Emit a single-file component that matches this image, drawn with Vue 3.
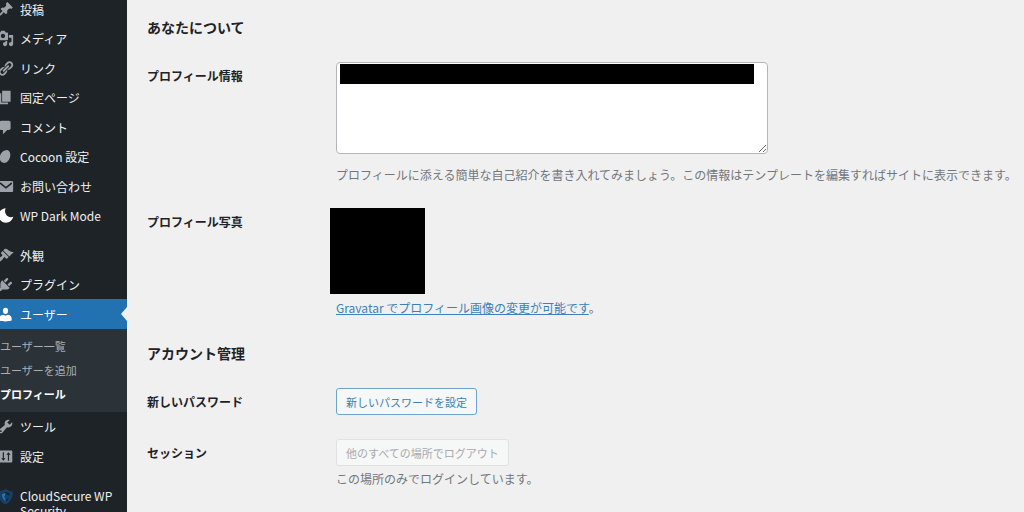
<script setup>
const groups = [
  [
    { label: '投稿', icon: 'post' },
    { label: 'メディア', icon: 'media' },
    { label: 'リンク', icon: 'link' },
    { label: '固定ページ', icon: 'page' },
    { label: 'コメント', icon: 'comment' },
    { label: 'Cocoon 設定', icon: 'cocoon' },
    { label: 'お問い合わせ', icon: 'mail' },
    { label: 'WP Dark Mode', icon: 'moon' },
  ],
  [
    { label: '外観', icon: 'appearance' },
    { label: 'プラグイン', icon: 'plugin' },
    {
      label: 'ユーザー',
      icon: 'user',
      current: true,
      children: [
        { label: 'ユーザー一覧' },
        { label: 'ユーザーを追加' },
        { label: 'プロフィール', current: true },
      ],
    },
    { label: 'ツール', icon: 'tool' },
    { label: '設定', icon: 'settings' },
  ],
  [{ label: 'CloudSecure WP Security', icon: 'shield' }],
]

const icons = {
  post: 'M10.44 3.02l1.82-1.82 6.36 6.35-1.83 1.82c-1.05-.68-2.48-.57-3.41.36l-.75.75c-.92.93-1.04 2.35-.35 3.41l-1.83 1.82-2.41-2.41-2.8 2.79c-.42.42-3.38 2.71-3.8 2.29s1.86-3.39 2.28-3.81l2.79-2.79L4.1 9.36l1.83-1.82c1.05.69 2.48.57 3.4-.36l.75-.75c.93-.92 1.05-2.35.36-3.41z',
  media: 'M13 11V4c0-.55-.45-1-1-1h-1.67L9 1H5L3.67 3H2c-.55 0-1 .45-1 1v7c0 .55.45 1 1 1h10c.55 0 1-.45 1-1zM7 4.5c1.38 0 2.5 1.12 2.5 2.5S8.38 9.5 7 9.5 4.5 8.38 4.5 7 5.62 4.5 7 4.5zM14 6h5v10.5c0 1.38-1.12 2.5-2.5 2.5S14 17.88 14 16.5s1.12-2.5 2.5-2.5c.17 0 .34.02.5.05V9h-3V6zm-4 8.05V13h2v3.5c0 1.38-1.12 2.5-2.5 2.5S7 17.88 7 16.5 8.12 14 9.5 14c.17 0 .34.02.5.05z',
  link: 'M17.74 2.76c1.68 1.69 1.68 4.41 0 6.1l-1.53 1.52c-1.12 1.12-2.7 1.47-4.14 1.09l2.62-2.61.76-.77.76-.76c.84-.84.84-2.2 0-3.04-.84-.85-2.2-.85-3.04 0l-.77.76-3.38 3.38c-.37-1.44-.02-3.02 1.1-4.14l1.52-1.53c1.69-1.68 4.42-1.68 6.1 0zM8.59 13.43l5.34-5.34c.42-.42.42-1.1 0-1.52-.44-.43-1.13-.39-1.53 0l-5.33 5.34c-.42.42-.42 1.1 0 1.52.44.43 1.13.39 1.52 0zm-.76 2.29l4.14-4.15c.38 1.44.03 3.02-1.09 4.14l-1.52 1.53c-1.69 1.68-4.41 1.68-6.1 0-1.68-1.68-1.68-4.42 0-6.1l1.53-1.52c1.12-1.12 2.7-1.47 4.14-1.1l-4.14 4.15c-.85.84-.85 2.2 0 3.05.84.84 2.2.84 3.04 0z',
  page: 'M6 15V2h10v13H6zm-1 1h8v2H3V5h2v11z',
  comment: 'M5 2h9c1.1 0 2 .9 2 2v7c0 1.1-.9 2-2 2h-2l-5 5v-5H5c-1.1 0-2-.9-2-2V4c0-1.1.9-2 2-2z',
  cocoon: 'M10.500 2.500c3.600-.2 5.500 2.600 5.100 6.500-.5 4.600-3.500 8.500-7.300 8.500-3.600 0-5.500-3.100-5-7.100.6-4.500 3.500-7.700 7.200-7.900z',
  mail: 'M3.500 3.500h14c.8 0 1.500.7 1.500 1.500v10c0 .8-.7 1.500-1.500 1.500h-14c-.8 0-1.500-.7-1.500-1.500V5c0-.8.7-1.500 1.500-1.500zM3.400 5.500v1.600l7.100 5.400 7.100-5.400V5.500l-1-.1-6.100 4.800-6.100-4.800z',
  moon: 'M10.200 1.500c-2.200 4.800.9 10.300 5.800 10.600 1.100.1 2.100-.1 3.100-.5-.9 3.900-4.300 6.900-8.500 6.900-4.800 0-8.700-3.900-8.700-8.600 0-4.300 3.600-8.200 8.300-8.400z',
  appearance: 'M14.48 11.06L7.41 3.99l1.5-1.5c.5-.56 2.3-.47 3.51.32 1.21.8 1.43 1.28 2.91 2.1 1.18.64 2.45 1.26 4.45.85zm-.71.71L6.7 4.7 4.93 6.47c-.39.39-.39 1.02 0 1.41l1.06 1.06c.39.39.39 1.03 0 1.42-.6.6-1.43 1.11-2.21 1.69-.35.26-.7.53-1.01.84C1.43 14.23.4 16.08 1.4 17.07c.99 1 2.84-.03 4.18-1.36.31-.31.58-.66.85-1.02.57-.78 1.08-1.61 1.69-2.21.39-.39 1.02-.39 1.41 0l1.06 1.06c.39.39 1.02.39 1.41 0z',
  plugin: 'M13.11 4.36L9.87 7.6 8 5.73l3.24-3.24c.35-.34 1.05-.2 1.56.32.52.51.66 1.21.31 1.55zm-8 1.77l.91-1.12 9.01 9.01-1.19.84c-.71.71-2.63 1.16-3.82 1.16H6.14L4.9 17.26c-.59.59-1.54.59-2.12 0-.59-.58-.59-1.53 0-2.12l1.24-1.24v-3.88c0-1.13.4-3.19 1.09-3.89zm7.26 3.97l3.24-3.24c.34-.35 1.04-.21 1.55.31.52.51.66 1.21.31 1.55l-3.24 3.25z',
  user: 'M10 9.500c-2.300 0-3.100-2.300-3.100-3.900C6.900 3.500 8 2 10 2s3.100 1.500 3.100 3.600c0 1.600-.8 3.900-3.100 3.900zM7.200 10.400l2.800 1 2.800-1c2.600.2 4.400 2 4.400 4.200V17.200s-3.600 1-7.200 1-7.200-1-7.200-1v-2.600c0-2.200 1.800-4 4.400-4.200z',
  tool: 'M16.68 9.77c-1.34 1.34-3.3 1.67-4.95.99l-5.41 6.52c-.99.99-2.59.99-3.58 0s-.99-2.59 0-3.57l6.52-5.42c-.68-1.65-.35-3.61.99-4.95 1.28-1.28 3.12-1.62 4.72-1.06l-2.89 2.89 2.82 2.82 2.86-2.87c.53 1.58.18 3.39-1.08 4.65zM3.81 16.21c.4.39 1.04.39 1.43 0 .4-.4.4-1.04 0-1.43-.39-.4-1.03-.4-1.43 0-.39.39-.39 1.03 0 1.43z',
  settings: 'M18 16V4c0-.55-.45-1-1-1H3c-.55 0-1 .45-1 1v12c0 .55.45 1 1 1h14c.55 0 1-.45 1-1zM6.800 5h1.400v7h1.800l-2.500 3-2.500-3h1.800zM12.800 15h1.400V8h1.800l-2.500-3-2.500 3h1.800z',
}
</script>

<template>
  <div class="admin">
    <nav class="sidebar" aria-label="メインメニュー">
      <ul v-for="(group, g) in groups" :key="g" class="group">
        <li v-for="item in group" :key="item.label" class="item">
          <a href="#" class="link" :class="[item.icon, { current: item.current }]">
            <svg class="icon" viewBox="0 0 20 20" aria-hidden="true">
              <template v-if="item.icon === 'shield'">
                <path fill="#173f68" d="M10 1c2.500 2 5.500 3 8.500 3 .5 6-1.500 12-8.500 15.500C3 16 1 10 1.500 4 4.500 4 7.500 3 10 1z" />
                <path fill="#1d2327" d="M10 4.500l5 2v2.300l-4.500-1.300-2.700 2.700 2.700 3.300 3.500-1.500-1.500 2.500-2.500 1.500c-3-1.500-5-5-5-9z" />
                <path fill="#2074b0" d="M10 5.500v2.500l-1.500 2.200L10 13v3.200C7 14 5.500 11 5.500 7.200z" />
              </template>
              <path v-else fill="currentColor" fill-rule="evenodd" :d="icons[item.icon]" />
            </svg>
            <span class="text">{{ item.label }}</span>
          </a>
          <ul v-if="item.children" class="submenu">
            <li v-for="child in item.children" :key="child.label">
              <a href="#" :class="{ active: child.current }">{{ child.label }}</a>
            </li>
          </ul>
        </li>
      </ul>
    </nav>

    <main class="content">
      <h2>あなたについて</h2>
      <div class="row">
        <label class="name" for="bio">プロフィール情報</label>
        <div class="field">
          <div class="bio-box">
            <textarea id="bio"></textarea>
            <span class="redacted"></span>
          </div>
          <p class="description bio-help">プロフィールに添える簡単な自己紹介を書き入れてみましょう。この情報はテンプレートを編集すればサイトに表示できます。</p>
        </div>
      </div>
      <div class="row">
        <span class="name">プロフィール写真</span>
        <div class="field">
          <div class="photo"></div>
          <p class="description photo-help"><a href="#">Gravatar でプロフィール画像の変更が可能です</a>。</p>
        </div>
      </div>

      <h2 class="next">アカウント管理</h2>
      <div class="row">
        <span id="password-name" class="name">新しいパスワード</span>
        <div class="field">
          <button type="button" class="button" aria-describedby="password-name">新しいパスワードを設定</button>
        </div>
      </div>
      <div class="row">
        <span id="session-name" class="name">セッション</span>
        <div class="field">
          <button type="button" class="button" disabled aria-describedby="session-name">他のすべての場所でログアウト</button>
          <p class="description session-help">この場所のみでログインしています。</p>
        </div>
      </div>
    </main>
  </div>
</template>

<style>
body {
  background: #f0f0f0;
  overflow: hidden;
}
</style>

<style scoped>
.admin {
  display: flex;
  height: 100vh;
  overflow: hidden;
  background: #f0f0f0;
  color: #1d2327;
  font: 12px/18px "Noto Sans CJK JP", sans-serif;
}
ul {
  margin: 0;
  padding: 0;
  list-style: none;
}
.sidebar {
  flex: 0 0 127px;
  background: #1d2327;
  overflow: hidden;
}
.group:first-child {
  margin-top: -6px;
}
.group + .group {
  margin-top: 10px;
}
.link {
  position: relative;
  display: flex;
  align-items: center;
  gap: 6px;
  height: 30px;
  margin-left: -3px;
  color: #f0f0f1;
  line-height: 15px;
  text-decoration: none;
}
.item:nth-child(even) > .link {
  height: 29px;
}
.icon {
  flex: none;
  width: 17px;
  height: 17px;
  color: #9ca2a7;
}
.moon .icon {
  color: #fff;
}
.link.current {
  background: #2271b1;
  color: #fff;
}
.current .icon {
  color: #fff;
}
.current::after {
  content: "";
  position: absolute;
  right: 0;
  top: 8px;
  border: 7px solid transparent;
  border-left-width: 0;
  border-right: 6px solid #f0f0f0;
}
.link.shield {
  align-items: flex-start;
  height: auto;
  padding: 7px 10px 7px 0;
}
.submenu {
  padding: 5px 0 6px;
  background: #2c3338;
}
.submenu a {
  display: block;
  font-size: 11px;
  line-height: 24px;
  color: #a9adb1;
  text-decoration: none;
}
.submenu .active {
  color: #fff;
  font-weight: 700;
}
.content {
  flex: 1;
  min-width: 0;
  padding: 17px 0 0 20px;
}
h2 {
  margin: 0 0 15px;
  font-size: 14px;
  line-height: 20px;
  font-weight: 700;
}
h2.next {
  margin-top: 12px;
}
.row {
  display: grid;
  grid-template-columns: 189px minmax(0, 1fr);
  padding-bottom: 14px;
}
.name {
  padding-top: 15px;
  font-weight: 700;
}
.field {
  padding-top: 10px;
}
.bio-box {
  position: relative;
  width: 432px;
  max-width: 100%;
}
textarea {
  display: block;
  box-sizing: border-box;
  width: 100%;
  height: 92px;
  padding: 2px 5px;
  border: 1px solid #b4b6b9;
  border-radius: 4px;
  background: #fff;
  font: inherit;
}
.redacted {
  position: absolute;
  left: 4px;
  right: 14px;
  top: 2px;
  height: 20px;
  background: #000;
}
.description {
  margin: 0;
  color: #72777c;
  white-space: nowrap;
}
.bio-help {
  margin-top: 12px;
}
.photo {
  width: 95px;
  height: 86px;
  margin-left: -6px;
  background: #000;
}
.photo-help {
  margin-top: 5px;
}
.description a {
  color: #3d80b9;
}
.button {
  display: block;
  height: 27px;
  padding: 0 9px;
  border: 1px solid #6fa3d0;
  border-radius: 3px;
  background: #f6f7f7;
  color: #3d80b9;
  font: inherit;
  font-size: 11px;
}
.button:disabled {
  border-color: #e0e1e2;
  color: #a7aaad;
}
.session-help {
  margin-top: 4px;
}
</style>
